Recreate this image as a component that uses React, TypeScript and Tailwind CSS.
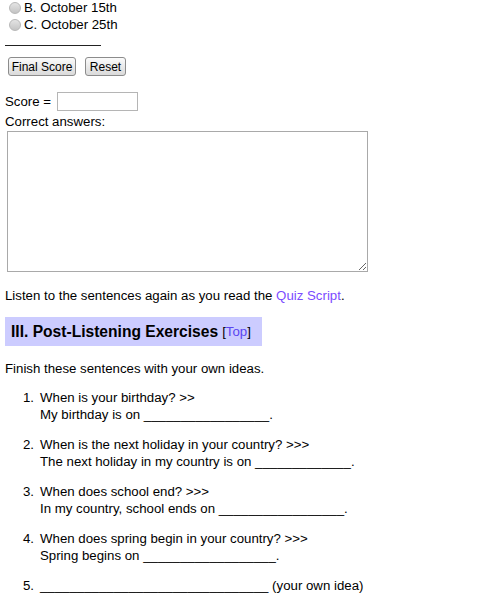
import React from "react";

const Radio: React.FC<{ label: string }> = ({ label }) => (
  <div className="flex items-center h-[17px]">
    <span className="ml-[4px] mr-[3px] w-[12px] h-[12px] rounded-full border border-[#b8b8b8] bg-gradient-to-b from-[#e4e4e4] to-[#c4c4c4]"></span>
    <span>{label}</span>
  </div>
);

const items = [
  { q: "When is your birthday? >>", a: "My birthday is on ", blank: "_________________", end: "." },
  { q: "When is the next holiday in your country? >>>", a: "The next holiday in my country is on ", blank: "_____________", end: "." },
  { q: "When does school end? >>>", a: "In my country, school ends on ", blank: "_________________", end: "." },
  { q: "When does spring begin in your country? >>>", a: "Spring begins on ", blank: "__________________", end: "." },
];

const App: React.FC = () => {
  return (
    <div className="min-h-screen bg-white text-black font-['Liberation_Sans',Arial,sans-serif] text-[13.25px] leading-[17px] px-[5px] overflow-hidden">
      <div className="-mt-[1px]">
        <Radio label="B. October 15th" />
        <Radio label="C. October 25th" />
      </div>

      <div className="mt-[12px] w-[96px] h-px bg-[#222]"></div>

      <div className="mt-[11px] ml-[3px] flex gap-[9px]">
        <button className="h-[19px] w-[68px] text-[12px] leading-none border border-[#8c8c8c] rounded-[3px] bg-gradient-to-b from-[#fbfbfb] to-[#dadada]">
          Final Score
        </button>
        <button className="h-[19px] w-[41px] text-[12px] leading-none border border-[#8c8c8c] rounded-[3px] bg-gradient-to-b from-[#fbfbfb] to-[#dadada]">
          Reset
        </button>
      </div>

      <div className="mt-[16px] flex items-center">
        <span>Score =</span>
        <input className="ml-[6px] w-[81px] h-[19px] border border-[#b5b5b5] outline-none" />
      </div>

      <div className="mt-[2px]">Correct answers:</div>

      <textarea className="block mt-[1px] ml-[2px] w-[361px] h-[141px] border border-[#a9a9a9] outline-none resize"></textarea>

      <p className="mt-[15px]">
        Listen to the sentences again as you read the <a className="text-[#7b4bff]">Quiz Script</a>.
      </p>

      <div className="mt-[13px] w-[257px] h-[29px] bg-[#ccccff] flex items-center pl-[6px]">
        <h3 className="font-bold text-[15.6px]">III. Post-Listening Exercises</h3>
        <span className="ml-[4px] text-[13.25px]">
          [<a className="text-[#5a45f0]">Top</a>]
        </span>
      </div>

      <p className="mt-[14px]">Finish these sentences with your own ideas.</p>

      <ol className="mt-[12px] flex flex-col gap-[13px]">
        {items.map((it, i) => (
          <li key={i} className="flex">
            <span className="w-[29px] text-right">{i + 1}.</span>
            <div className="ml-[6px]">
              <div>{it.q}</div>
              <div>
                {it.a}
                {it.blank}
                {it.end}
              </div>
            </div>
          </li>
        ))}
        <li className="flex">
          <span className="w-[29px] text-right">5.</span>
          <div className="ml-[6px]">_______________________________ (your own idea)</div>
        </li>
      </ol>
    </div>
  );
};

export default App;
